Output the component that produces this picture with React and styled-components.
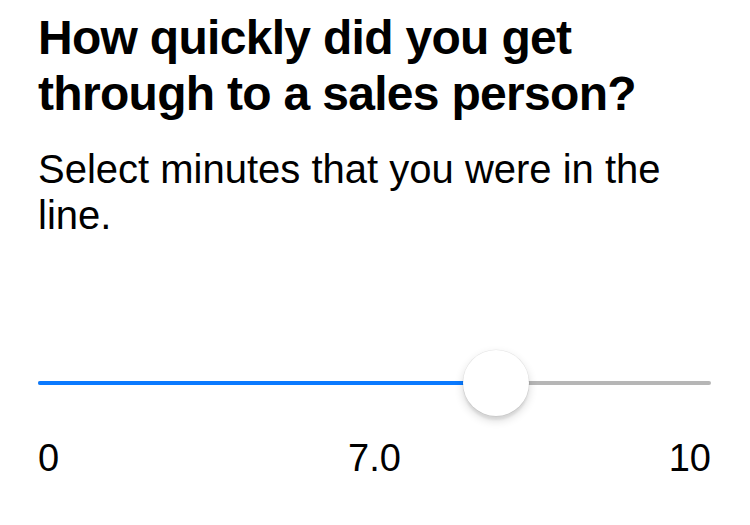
import React, { useState } from 'react'
import styled, { createGlobalStyle } from 'styled-components'

const MIN = 0
const MAX = 10
const THUMB = 66

const GlobalStyle = createGlobalStyle`
  html, body {
    margin: 0;
    padding: 0;
    background: #fff;
  }
  body {
    font-family: "Liberation Sans", Arial, Helvetica, sans-serif;
    color: #000;
  }
`

const App = () => {
  const [value] = useState(7)
  const ratio = (value - MIN) / (MAX - MIN)
  const thumbLeft = `calc(${ratio} * (100% - ${THUMB}px))`
  const fillWidth = `calc(${ratio} * (100% - ${THUMB}px) + ${THUMB / 2}px)`

  return (
    <>
      <GlobalStyle />
      <Page>
        <Title>How quickly did you get through to a sales person?</Title>
        <Subtitle>Select minutes that you were in the line.</Subtitle>
        <SliderWrapper>
          <Track />
          <Fill style={{ width: fillWidth }} />
          <Thumb style={{ left: thumbLeft }} />
        </SliderWrapper>
        <Labels>
          <Label align="left">{MIN}</Label>
          <Label align="center">{value.toFixed(1)}</Label>
          <Label align="right">{MAX}</Label>
        </Labels>
      </Page>
    </>
  )
}

export default App

const Page = styled.div`
  width: 750px;
  height: 525px;
  box-sizing: border-box;
  padding: 10px 39px 0 38px;
  display: flex;
  flex-direction: column;
  overflow: hidden;
`

const Title = styled.h1`
  margin: 0;
  font-size: 48px;
  line-height: 56px;
  font-weight: 700;
  letter-spacing: -0.7px;
`

const Subtitle = styled.p`
  margin: 24px 0 0;
  font-size: 40px;
  line-height: 46px;
  font-weight: 400;
`

const SliderWrapper = styled.div`
  position: relative;
  height: ${THUMB}px;
  margin-top: 112px;
  display: flex;
  align-items: center;
`

const Track = styled.div`
  width: 100%;
  height: 4px;
  border-radius: 2px;
  background: #b6b6b6;
`

const Fill = styled.div`
  position: absolute;
  left: 0;
  top: 50%;
  height: 4px;
  margin-top: -2px;
  border-radius: 2px;
  background: #0a7aff;
`

const Thumb = styled.div`
  position: absolute;
  top: 0;
  width: ${THUMB}px;
  height: ${THUMB}px;
  border-radius: 50%;
  background: #fff;
  box-shadow: 0 0 0 0.5px rgba(0, 0, 0, 0.08), 0 4px 10px rgba(0, 0, 0, 0.16), 0 4px 2px rgba(0, 0, 0, 0.06);
`

const Labels = styled.div`
  margin-top: 19px;
  display: grid;
  grid-template-columns: 1fr auto 1fr;
  font-size: 38px;
  line-height: 46px;
`

const Label = styled.span`
  text-align: ${props => props.align};
`
